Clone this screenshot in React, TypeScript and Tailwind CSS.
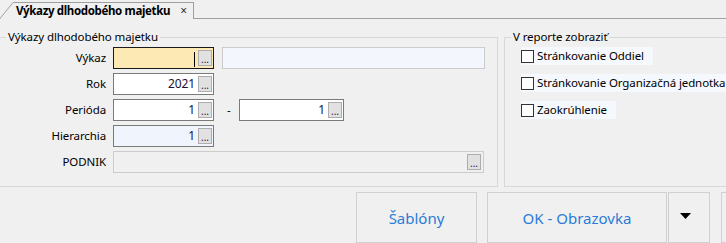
import React from 'react';

const Dots: React.FC = () => (
  <span className="flex h-[16px] w-[14px] shrink-0 items-end justify-center border border-[#adadad] bg-[#e1e1e1] pb-[1px] text-[10px] leading-[10px] tracking-normal text-[#1a1a4a]">
    ...
  </span>
);

type FieldProps = {
  value?: string;
  width: string;
  tone: string;
  cursor?: boolean;
};

const Field: React.FC<FieldProps> = ({ value, width, tone, cursor }) => (
  <div className={`flex h-[22px] shrink-0 items-center border pr-[1px] ${width} ${tone}`}>
    <span className="flex-1 pr-[3px] text-right text-[12px] text-[#1a1037]">
      {value}
      {cursor && <span className="inline-block h-[15px] w-px translate-y-[3px] bg-black" />}
    </span>
    <Dots />
  </div>
);

const Row: React.FC<{ label: string; children: React.ReactNode }> = ({ label, children }) => (
  <div className="flex h-[22px] items-center">
    <span className="w-[106px] shrink-0 text-right">{label}</span>
    <div className="ml-[7px] flex items-center">{children}</div>
  </div>
);

const Check: React.FC<{ label: string }> = ({ label }) => (
  <div className="flex h-[18px] items-center gap-[3px] whitespace-nowrap bg-[#f5f8fd] pr-[9px]">
    <span className="h-[13px] w-[13px] shrink-0 border border-[#333] bg-white" />
    <span>{label}</span>
  </div>
);

export default function App() {
  return (
    <div
      className="h-[243px] w-[726px] overflow-hidden bg-[#f0f0f0] text-[11.5px] leading-[16px] tracking-[-0.1px] text-black"
      style={{ fontFamily: '"Segoe UI", "Noto Sans", sans-serif' }}
    >
      {/* tab strip */}
      <div className="flex h-[19px] items-end border-b border-[#a0a0a0]">
        <svg width="13" height="17" className="-mb-px shrink-0">
          <polygon points="0,17 13,0 13,17" fill="#f0f0f0" />
          <line x1="0" y1="16.5" x2="13" y2="0.5" stroke="#9f9f9f" />
        </svg>
        <div className="-mb-px flex h-[17px] items-center border-t border-r border-[#9f9f9f] bg-[#f0f0f0] pl-[3px] pr-[6px]">
          <span className="text-[11.5px] font-bold tracking-[-0.35px]">Výkazy dlhodobého majetku</span>
          <span className="ml-[10px] text-[12px] text-[#333]">×</span>
        </div>
      </div>

      <div className="flex">
        <fieldset className="-ml-px mt-[10px] h-[158px] w-[499px] shrink-0 border border-[#d8d8d8]">
          <legend className="ml-[6px] px-[2px]">Výkazy dlhodobého majetku</legend>
          <div className="flex flex-col gap-[4px] pt-[2px]">
            <Row label="Výkaz">
              <Field width="w-[101px]" tone="border-[#1a1a1a] bg-[#fde9b3]" cursor />
              <div className="ml-[8px] h-[22px] w-[263px] shrink-0 border border-[#cccccc] bg-[#f3f7fd]" />
            </Row>
            <Row label="Rok">
              <Field value="2021" width="w-[101px]" tone="border-[#7a7a7a] bg-white" />
            </Row>
            <Row label="Perióda">
              <Field value="1" width="w-[101px]" tone="border-[#7a7a7a] bg-white" />
              <span className="ml-[13px] w-[12px]">-</span>
              <Field value="1" width="w-[105px]" tone="border-[#7a7a7a] bg-white" />
            </Row>
            <Row label="Hierarchia">
              <Field value="1" width="w-[101px]" tone="border-[#7a7a7a] bg-[#f0f5fd]" />
            </Row>
            <Row label="PODNIK">
              <Field width="w-[371px]" tone="border-[#cccccc] bg-[#f0f0f0] pr-[2px]" />
            </Row>
          </div>
        </fieldset>

        <fieldset className="ml-[6px] mt-[10px] h-[158px] w-[240px] shrink-0 border border-[#d8d8d8]">
          <legend className="ml-[6px] px-[2px]">V reporte zobraziť</legend>
          <div className="flex flex-col items-start gap-[9px] pl-[16px] pt-[2px]">
            <Check label="Stránkovanie Oddiel" />
            <Check label="Stránkovanie Organizačná jednotka" />
            <Check label="Zaokrúhlenie" />
          </div>
        </fieldset>
      </div>

      {/* buttons */}
      <div className="mt-[5px] flex text-[15px] tracking-normal text-[#2b7bd8]">
        <button className="ml-[356px] flex h-[51px] w-[121px] shrink-0 items-center justify-center border border-[#d0d0d0] bg-[#f0f0f0]">
          Šablóny
        </button>
        <button className="ml-[10px] flex h-[51px] w-[180px] shrink-0 items-center justify-center border border-[#d0d0d0] bg-[#f0f0f0]">
          OK - Obrazovka
        </button>
        <button className="ml-px flex h-[51px] w-[42px] shrink-0 items-center justify-center border border-[#d0d0d0] bg-[#f0f0f0] pr-[8px] pb-[3px]">
          <svg width="11" height="6">
            <polygon points="0,0 11,0 5.5,6" fill="#000" />
          </svg>
        </button>
        <button className="ml-[11px] h-[51px] w-[100px] shrink-0 border border-[#d0d0d0] bg-[#f0f0f0]" />
      </div>
    </div>
  );
}
